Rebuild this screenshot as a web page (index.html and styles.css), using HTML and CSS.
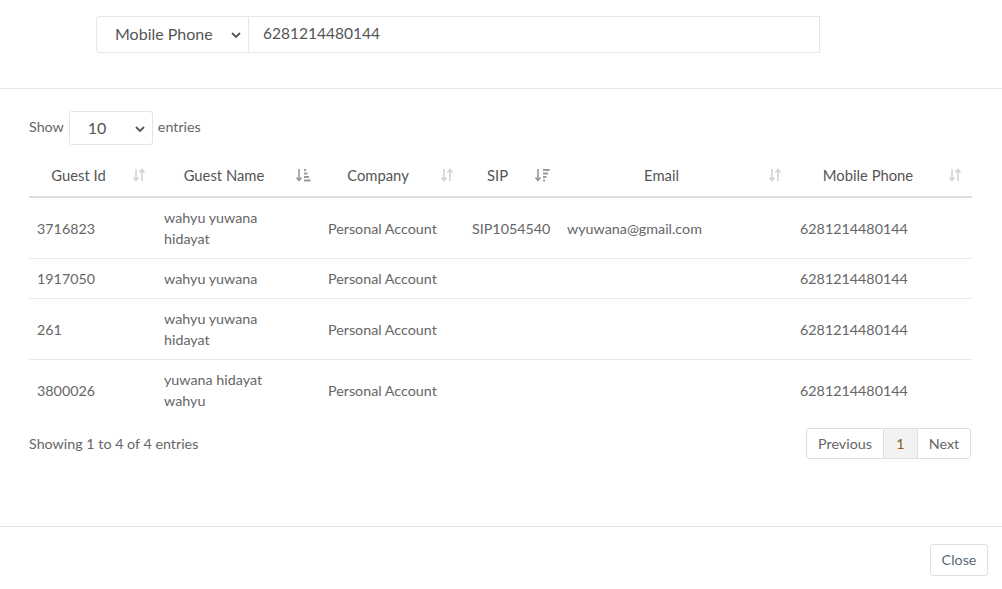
FILE: index.html
```html
<!DOCTYPE html>
<html>
<head>
<meta charset="utf-8">
<link rel="stylesheet" href="styles.css">
</head>
<body>
<div class="modal">
  <div class="search">
    <div class="sel-type">Mobile Phone
      <svg class="chev" width="12" height="8" viewBox="0 0 12 8"><path d="M2 2 L6 6 L10 2" fill="none" stroke="#555" stroke-width="1.8"/></svg>
    </div>
    <div class="search-input">6281214480144</div>
  </div>
  <div class="body">
    <div class="length"><span class="lbl">Show</span>
      <div class="len-sel">10
        <svg class="chev" width="12" height="8" viewBox="0 0 12 8"><path d="M2 2 L6 6 L10 2" fill="none" stroke="#555" stroke-width="1.8"/></svg>
      </div>
      <span class="lbl">entries</span></div>
    <table class="grid">
      <colgroup>
        <col style="width:127px"><col style="width:164px"><col style="width:144px"><col style="width:95px"><col style="width:233px"><col style="width:180px">
      </colgroup>
      <thead>
        <tr>
          <th>Guest Id<svg class="sort" viewBox="0 0 16 16"><path d="M5 2v11M2.5 10.5L5 13.5L7.5 10.5M11 14V3M8.5 5.5L11 2.5L13.5 5.5" fill="none" stroke="#d3d3d3" stroke-width="1.6"/></svg></th>
          <th>Guest Name<svg class="sort" viewBox="0 0 16 16"><path d="M4 2v11M1.5 10.5L4 13.5L6.5 10.5" fill="none" stroke="#9a9a9a" stroke-width="1.6"/><rect x="9" y="2" width="2" height="2" fill="#9a9a9a"/><rect x="9" y="5.5" width="3.5" height="2" fill="#9a9a9a"/><rect x="9" y="9" width="5" height="2" fill="#9a9a9a"/><rect x="9" y="12.5" width="6.5" height="2" fill="#9a9a9a"/></svg></th>
          <th>Company<svg class="sort" viewBox="0 0 16 16"><path d="M5 2v11M2.5 10.5L5 13.5L7.5 10.5M11 14V3M8.5 5.5L11 2.5L13.5 5.5" fill="none" stroke="#d3d3d3" stroke-width="1.6"/></svg></th>
          <th>SIP<svg class="sort" viewBox="0 0 16 16"><path d="M4 2v11M1.5 10.5L4 13.5L6.5 10.5" fill="none" stroke="#9a9a9a" stroke-width="1.6"/><rect x="9" y="2" width="6.5" height="2" fill="#9a9a9a"/><rect x="9" y="5.5" width="5" height="2" fill="#9a9a9a"/><rect x="9" y="9" width="3.5" height="2" fill="#9a9a9a"/><rect x="9" y="12.5" width="2" height="2" fill="#9a9a9a"/></svg></th>
          <th>Email<svg class="sort" viewBox="0 0 16 16"><path d="M5 2v11M2.5 10.5L5 13.5L7.5 10.5M11 14V3M8.5 5.5L11 2.5L13.5 5.5" fill="none" stroke="#d3d3d3" stroke-width="1.6"/></svg></th>
          <th>Mobile Phone<svg class="sort" viewBox="0 0 16 16"><path d="M5 2v11M2.5 10.5L5 13.5L7.5 10.5M11 14V3M8.5 5.5L11 2.5L13.5 5.5" fill="none" stroke="#d3d3d3" stroke-width="1.6"/></svg></th>
        </tr>
      </thead>
      <tbody>
        <tr><td>3716823</td><td class="name">wahyu yuwana hidayat</td><td>Personal Account</td><td>SIP1054540</td><td>wyuwana@gmail.com</td><td>6281214480144</td></tr>
        <tr><td>1917050</td><td class="name">wahyu yuwana</td><td>Personal Account</td><td></td><td></td><td>6281214480144</td></tr>
        <tr><td>261</td><td class="name">wahyu yuwana hidayat</td><td>Personal Account</td><td></td><td></td><td>6281214480144</td></tr>
        <tr><td>3800026</td><td class="name">yuwana hidayat wahyu</td><td>Personal Account</td><td></td><td></td><td>6281214480144</td></tr>
      </tbody>
    </table>
    <div class="info-row">
      <div class="info">Showing 1 to 4 of 4 entries</div>
      <div class="pager">
        <span class="pg first">Previous</span><span class="pg active">1</span><span class="pg last">Next</span>
      </div>
    </div>
  </div>
  <div class="footer">
    <button class="close">Close</button>
  </div>
</div>
</body>
</html>
```

FILE: styles.css
```css
* { box-sizing: border-box; }
html, body { margin: 0; padding: 0; background: #fff; }
body {
  font-family: Lato, "Open Sans", sans-serif;
  font-size: 14.3px;
  color: #666;
}
.modal { width: 1002px; }
.search {
  display: flex;
  padding: 16px 0 0 96px;
  height: 89px;
  border-bottom: 1px solid #e5e5e5;
}
.sel-type {
  width: 153px;
  height: 37px;
  border: 1px solid #e6e6e6;
  border-radius: 3px 0 0 3px;
  display: flex;
  align-items: center;
  padding: 0 0 3px 18px;
  font-size: 16px;
  color: #555;
  position: relative;
}
.sel-type .chev { position: absolute; right: 6px; top: 14px; }
.search-input {
  width: 571px;
  height: 37px;
  border: 1px solid #e6e6e6;
  border-left: none;
  display: flex;
  align-items: center;
  padding: 0 0 3px 14px;
  font-size: 15.5px;
  color: #555;
}
.body { padding: 22px 30px 67px 29px; }
.length {
  display: flex;
  align-items: center;
  gap: 5px;
  height: 34px;
}
.length .lbl { margin-bottom: 4px; }
.len-sel {
  width: 84px;
  height: 34px;
  border: 1px solid #e3e3e3;
  border-radius: 3px;
  display: flex;
  align-items: center;
  padding: 0 0 1px 18px;
  font-size: 16px;
  color: #555;
  position: relative;
}
.len-sel .chev { position: absolute; right: 6px; top: 13px; }
.grid {
  margin-top: 10px;
  width: 943px;
  border-collapse: collapse;
  table-layout: fixed;
}
.grid th {
  position: relative;
  text-align: center;
  font-weight: 400;
  color: #555;
  padding: 10px 36px 11px 8px;
  line-height: 20px;
  font-size: 14.8px;
  border-bottom: 2px solid #dedede;
  white-space: nowrap;
}
.grid th .sort {
  position: absolute;
  right: 9px;
  top: 12px;
  width: 16px;
  height: 16px;
}
.grid td {
  padding: 9px 8px;
  line-height: 21px;
  border-bottom: 1px solid #e9e9e9;
  vertical-align: middle;
}
.grid td.name { padding-right: 30px; }
.grid tbody tr:last-child td { border-bottom: none; }
.info-row {
  display: flex;
  justify-content: space-between;
  align-items: center;
  margin-top: 8px;
  padding-right: 1px;
}
.pager { display: flex; height: 31px; }
.pg {
  display: flex;
  align-items: center;
  justify-content: center;
  border: 1px solid #dedede;
  height: 31px;
  color: #666;
  padding-bottom: 1px;
}
.pg.first { width: 78px; border-radius: 3px 0 0 3px; }
.pg.active { width: 33px; background: #f2f2f2; border-left: none; border-right: none; color: #8a5a2b; }
.pg.last { width: 54px; border-radius: 0 3px 3px 0; }
.footer {
  border-top: 1px solid #e5e5e5;
  display: flex;
  justify-content: flex-end;
  padding: 17px 14px 0 0;
}
.close {
  font-family: Lato, "Open Sans", sans-serif;
  font-size: 14.3px;
  width: 58px;
  height: 32px;
  background: #fff;
  border: 1px solid #e0e0e0;
  border-radius: 3px;
  color: #5a6775;
  padding: 0 0 2px;
}
```
